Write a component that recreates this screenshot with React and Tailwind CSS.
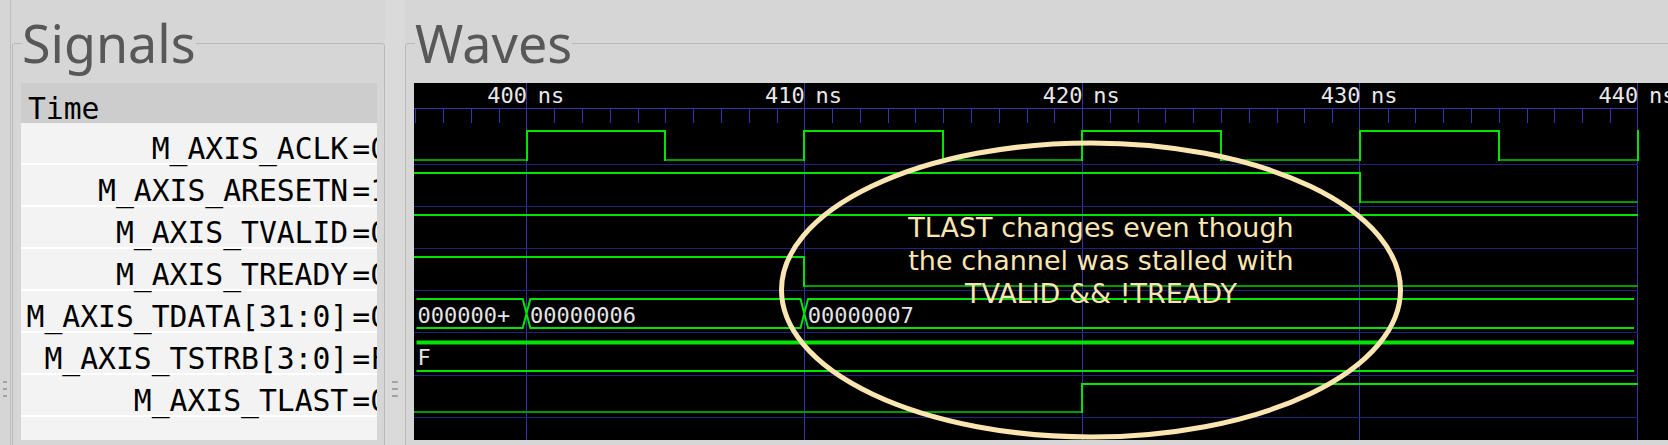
import React from "react";

const X = (t) => 112.5 + (t - 400) * 27.78;
const B = (k) => 81 + 42.1 * k;
const END = Math.round(X(440));
const HI = "#00e400";
const LO = "#009a00";
const GRID = "#23237a";
const RULER = "#3535aa";
const MONO = "'DejaVu Sans Mono', 'Liberation Mono', monospace";

function Bit({ k, changes }) {
  const hi = Math.round(B(k) - 33);
  const lo = Math.round(B(k) - 4.3);
  const xs = changes.map(([t]) => (t === null ? 0 : Math.round(X(t))));
  const els = [];
  for (let i = 0; i < changes.length; i++) {
    const x1 = xs[i];
    const x2 = i + 1 < changes.length ? xs[i + 1] : END;
    const v = changes[i][1];
    if (x2 > x1) {
      const y = v ? hi : lo;
      els.push(
        <line key={"h" + i} x1={x1} x2={x2} y1={y} y2={y} stroke={v ? HI : LO} strokeWidth={2} />
      );
    }
    if (i > 0 && changes[i][1] !== changes[i - 1][1]) {
      els.push(
        <line key={"v" + i} x1={x1} x2={x1} y1={hi - 1} y2={lo + 1} stroke={HI} strokeWidth={2} />
      );
    }
  }
  return <g>{els}</g>;
}

function Bus({ k, segs, thickTop }) {
  const top = thickTop ? B(k) - 32 : Math.round(B(k) - 33);
  const bot = Math.round(B(k) - 4);
  const mid = (top + bot) / 2;
  const d = 3.8;
  const n = segs.length;
  let topPath = "";
  let botPath = "";
  const labels = [];
  for (let i = 0; i < n; i++) {
    const xa = i === 0 ? 2.5 : X(segs[i][0]);
    const xb = i === n - 1 ? 1220 : X(segs[i + 1][0]);
    const la = i === 0 ? xa : xa + d;
    const rb = i === n - 1 ? xb : xb - d;
    if (i === 0) {
      topPath += `M${la} ${top} `;
      botPath += `M${la} ${bot} `;
    } else {
      topPath += `M${xa} ${mid} L${la} ${top} `;
      botPath += `M${xa} ${mid} L${la} ${bot} `;
    }
    topPath += `L${rb} ${top} `;
    botPath += `L${rb} ${bot} `;
    if (i < n - 1) {
      topPath += `L${xb} ${mid} `;
      botPath += `L${xb} ${mid} `;
    }
    labels.push(
      <text
        key={i}
        x={i === 0 ? 3.5 : xa + 3.5}
        y={B(k) - 9.7}
        fill="#e4e4e4"
        fontFamily={MONO}
        fontSize={22}
      >
        {segs[i][1]}
      </text>
    );
  }
  return (
    <g>
      <path d={topPath} stroke={HI} strokeWidth={thickTop ? 4 : 2} fill="none" />
      <path d={botPath} stroke={HI} strokeWidth={2} fill="none" />
      {labels}
    </g>
  );
}

function WaveCanvas() {
  const ticks = [];
  for (let t = 396; t < 440; t++) if (t % 10) ticks.push(t);
  const majors = [400, 410, 420, 430, 440];
  const px = (v) => Math.round(v) + 0.5;
  return (
    <svg width="1264" height="357" className="block">
      {/* ruler */}
      <line x1={0} x2={END} y1={25.5} y2={25.5} stroke={RULER} strokeWidth={1} />
      {ticks.map((t) => (
        <line key={t} x1={px(X(t))} x2={px(X(t))} y1={25.5} y2={40} stroke={RULER} strokeWidth={1} />
      ))}
      {majors.map((t) => (
        <line key={t} x1={px(X(t) - 0.5)} x2={px(X(t) - 0.5)} y1={0} y2={357} stroke={RULER} strokeWidth={1} />
      ))}
      {majors.map((t) => (
        <g key={"l" + t}>
          <text x={X(t) + 0.5} y={20} textAnchor="end" fill="#e8e8e8" fontFamily={MONO} fontSize={22}>
            {t}
          </text>
          <text x={X(t) + 11.2} y={20} fill="#e8e8e8" fontFamily={MONO} fontSize={22}>
            ns
          </text>
        </g>
      ))}
      {/* row separators */}
      {[0, 1, 2, 3, 4, 5, 6].map((k) => (
        <line key={k} x1={0} x2={END} y1={px(B(k))} y2={px(B(k))} stroke={GRID} strokeWidth={1} />
      ))}
      {/* signals */}
      <Bit
        k={0}
        changes={[
          [null, 0],
          [400, 1],
          [405, 0],
          [410, 1],
          [415, 0],
          [420, 1],
          [425, 0],
          [430, 1],
          [435, 0],
          [440, 1],
        ]}
      />
      <Bit k={1} changes={[[null, 1], [430, 0]]} />
      <Bit k={2} changes={[[null, 1]]} />
      <Bit k={3} changes={[[null, 1], [410, 0]]} />
      <Bus k={4} segs={[[null, "000000+"], [400, "00000006"], [410, "00000007"]]} />
      <Bus k={5} segs={[[null, "F"]]} thickTop />
      <Bit k={6} changes={[[null, 0], [420, 1]]} />
      {/* annotation */}
      <ellipse cx={677} cy={207} rx={309.5} ry={147} fill="none" stroke="#fbe6b2" strokeWidth={5} />
      <text
        textAnchor="middle"
        fill="#fbe6b2"
        fontFamily="'DejaVu Sans', 'Liberation Sans', sans-serif"
        fontSize={27}
      >
        <tspan x={687} y={154}>TLAST changes even though</tspan>
        <tspan x={687} y={187}>the channel was stalled with</tspan>
        <tspan x={687} y={220}>TVALID &amp;&amp; !TREADY</tspan>
      </text>
    </svg>
  );
}

const signals = [
  ["M_AXIS_ACLK", "0"],
  ["M_AXIS_ARESETN", "1"],
  ["M_AXIS_TVALID", "0"],
  ["M_AXIS_TREADY", "0"],
  ["M_AXIS_TDATA[31:0]", "0"],
  ["M_AXIS_TSTRB[3:0]", "F"],
  ["M_AXIS_TLAST", "0"],
];

function Handle({ w }) {
  return (
    <div className="flex flex-col items-center gap-[5px]">
      <div className={w} />
      <div className={w} />
      <div className={w} />
    </div>
  );
}

export default function App() {
  return (
    <div className="w-[1668px] h-[445px] overflow-hidden bg-[#d6d6d6] flex">
      {/* left collapsed strip */}
      <div className="w-[11px] shrink-0 border-r border-[#bdbdbd] pt-[381px] flex justify-center">
        <Handle w="w-[4px] h-[2px] bg-[#a3a3a3]" />
      </div>

      {/* Signals */}
      <fieldset className="ml-[1px] mt-[17px] w-[373px] h-[460px] min-w-0 shrink-0 border border-[#b9b9b9] rounded-[3px] pl-[8px] pr-[7px] pt-[14px]">
        <legend
          className="ml-[1px] text-[52px] leading-none text-[#585858]"
          style={{ fontFamily: "'Noto Sans', 'Open Sans', sans-serif" }}
        >
          Signals
        </legend>
        <div
          className="w-[356px] h-[357px] bg-[#f3f3f3] overflow-hidden text-[29.7px] text-black"
          style={{ fontFamily: MONO }}
        >
          <div className="h-[40px] bg-[#cdcdcd] pt-[11px] pl-[7px] leading-[29px]">Time</div>
          {signals.map(([name, val]) => (
            <div
              key={name}
              className="w-[367px] h-[42px] border-b-2 border-white pt-[11px] leading-[29px] whitespace-nowrap flex justify-end"
            >
              <span>{name}</span>
              <span className="ml-[4px]">=</span>
              <span>{val}</span>
            </div>
          ))}
        </div>
      </fieldset>

      {/* splitter */}
      <div className="w-[20px] shrink-0 bg-[#dadada] pt-[381px] flex justify-center">
        <Handle w="w-[6px] h-[2px] bg-[#a3a3a3]" />
      </div>

      {/* Waves */}
      <fieldset className="mt-[17px] w-[1290px] h-[460px] min-w-0 shrink-0 border border-[#b9b9b9] rounded-[3px] pl-[8px] pt-[14px]">
        <legend
          className="ml-[1px] text-[52px] leading-none text-[#585858]"
          style={{ fontFamily: "'Noto Sans', 'Open Sans', sans-serif" }}
        >
          Waves
        </legend>
        <div className="w-[1264px] h-[357px] bg-black overflow-hidden">
          <WaveCanvas />
        </div>
      </fieldset>
    </div>
  );
}
